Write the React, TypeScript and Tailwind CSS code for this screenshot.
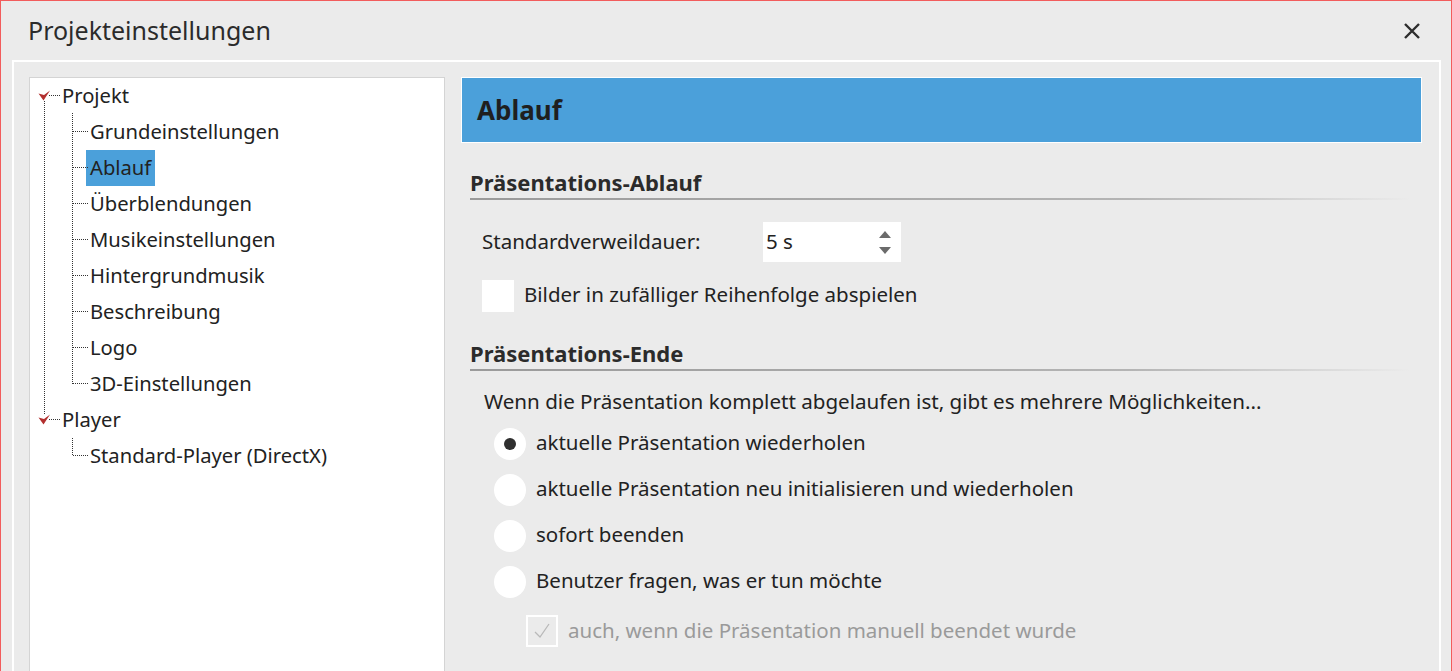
import React from "react";

const font = { fontFamily: '"Noto Sans", "Open Sans", sans-serif' };

const tree: { label: string; level: number; selected?: boolean }[] = [
  { label: "Projekt", level: 0 },
  { label: "Grundeinstellungen", level: 1 },
  { label: "Ablauf", level: 1, selected: true },
  { label: "Überblendungen", level: 1 },
  { label: "Musikeinstellungen", level: 1 },
  { label: "Hintergrundmusik", level: 1 },
  { label: "Beschreibung", level: 1 },
  { label: "Logo", level: 1 },
  { label: "3D-Einstellungen", level: 1 },
  { label: "Player", level: 0 },
  { label: "Standard-Player (DirectX)", level: 1 },
];

function TreeLines() {
  const dots = { stroke: "#333", strokeWidth: 1, strokeDasharray: "1 1" } as const;
  const childYs = [1, 2, 3, 4, 5, 6, 7, 8].map((k) => 18 + 36 * k - 0.5);
  return (
    <svg className="absolute left-0 top-0 pointer-events-none" width="420" height="420">
      <polygon points="8.5,15.5 14,17 20,12.5 13.5,22.5" fill="#b3302f" />
      <polygon points="8.5,339.5 14,341 20,336.5 13.5,346.5" fill="#b3302f" />
      <line x1="19" y1="17.5" x2="30" y2="17.5" {...dots} />
      <line x1="19" y1="341.5" x2="30" y2="341.5" {...dots} />
      <line x1="14.5" y1="23" x2="14.5" y2="336" {...dots} />
      <line x1="42.5" y1="35" x2="42.5" y2="306" {...dots} />
      {childYs.map((y) => (
        <line key={y} x1="43" y1={y} x2="58" y2={y} {...dots} />
      ))}
      <line x1="42.5" y1="360" x2="42.5" y2="378" {...dots} />
      <line x1="43" y1="377.5" x2="58" y2="377.5" {...dots} />
    </svg>
  );
}

function SectionTitle({ children }: { children: React.ReactNode }) {
  return (
    <div className="ml-[9px] mr-[12px]">
      <div className="h-[26px] leading-[26px] text-[22px] font-bold text-[#2b2b2b]">{children}</div>
      <div className="mt-[3px] h-[2px] bg-linear-to-r from-[#9a9a9a] via-[#b4b4b4] via-70% to-[#ebebeb]" />
    </div>
  );
}

function Radio({ label, checked }: { label: string; checked?: boolean }) {
  return (
    <div className="flex items-center h-[32px] ml-[33px]">
      <div className="w-[32px] h-[32px] rounded-full bg-white flex items-center justify-center">
        {checked && <div className="w-[12px] h-[12px] rounded-full bg-[#2f2f2f]" />}
      </div>
      <span className="ml-[10px] pb-[3px] text-[20.5px] text-[#222]">{label}</span>
    </div>
  );
}

export default function App() {
  return (
    <div
      style={font}
      className="w-[1452px] h-[671px] overflow-hidden bg-[#ebebeb] border-l border-t border-r border-[#f25c5c] flex flex-col"
    >
      <div className="h-[59px] flex items-center justify-between pl-[27px] pr-[30px] shrink-0">
        <span className="text-[25px] text-[#2b2b2b] mt-[1px]">Projekteinstellungen</span>
        <svg width="18" height="18" viewBox="0 0 18 18">
          <path d="M2 2 L16 16 M16 2 L2 16" stroke="#2d2d2d" strokeWidth="2.4" />
        </svg>
      </div>
      <div className="ml-[11px] mr-[10px] flex-1 border-l-2 border-t-2 border-r-2 border-white flex pl-[15px] pt-[15px] pr-[17px] gap-[16px]">
        <div className="w-[416px] shrink-0 bg-white border border-[#d4d4d4] border-b-0 relative">
          <TreeLines />
          <div className="flex flex-col">
            {tree.map((t) => (
              <div
                key={t.label}
                className={`h-[36px] flex items-center ${t.level === 0 ? "pl-[28px]" : "pl-[56px]"}`}
              >
                <span
                  className={`h-[36px] px-[4px] pb-[2px] flex items-center text-[20.2px] text-[#222] ${
                    t.selected ? "bg-[#4ba0da]" : ""
                  }`}
                >
                  {t.label}
                </span>
              </div>
            ))}
          </div>
        </div>
        <div className="flex-1 flex flex-col">
          <div className="h-[66px] border border-white bg-[#4ba0da] flex items-center pl-[15px] shrink-0">
            <span className="text-[26px] font-bold text-[#1f1f1f]">Ablauf</span>
          </div>
          <div className="mt-[26px]">
            <SectionTitle>Präsentations-Ablauf</SectionTitle>
          </div>
          <div className="mt-[22px] ml-[21px] h-[40px] flex items-center">
            <span className="w-[281px] pb-[2px] text-[20.5px] text-[#222]">Standardverweildauer:</span>
            <div className="w-[138px] h-[40px] bg-white flex items-center justify-between pl-[3px] pr-[10px]">
              <span className="pb-[2px] text-[20.5px] text-[#222]">5 s</span>
              <div className="flex flex-col gap-[9px]">
                <svg width="12" height="7" viewBox="0 0 12 7">
                  <polygon points="6,0 12,7 0,7" fill="#6b6b6b" />
                </svg>
                <svg width="12" height="7" viewBox="0 0 12 7">
                  <polygon points="0,0 12,0 6,7" fill="#6b6b6b" />
                </svg>
              </div>
            </div>
          </div>
          <div className="mt-[18px] ml-[21px] h-[32px] flex items-center">
            <div className="w-[32px] h-[32px] bg-white" />
            <span className="ml-[10px] pb-[3px] text-[20.5px] text-[#222]">Bilder in zufälliger Reihenfolge abspielen</span>
          </div>
          <div className="mt-[28px]">
            <SectionTitle>Präsentations-Ende</SectionTitle>
          </div>
          <div className="mt-[17px] ml-[23px] h-[26px] leading-[26px] text-[20.6px] text-[#222] whitespace-nowrap">
            Wenn die Präsentation komplett abgelaufen ist, gibt es mehrere Möglichkeiten...
          </div>
          <div className="mt-[14px] flex flex-col gap-[14px]">
            <Radio label="aktuelle Präsentation wiederholen" checked />
            <Radio label="aktuelle Präsentation neu initialisieren und wiederholen" />
            <Radio label="sofort beenden" />
            <Radio label="Benutzer fragen, was er tun möchte" />
          </div>
          <div className="mt-[17px] ml-[65px] h-[32px] flex items-center">
            <div className="w-[32px] h-[32px] border-2 border-white flex items-center justify-center">
              <svg width="20" height="20" viewBox="0 0 20 20">
                <path d="M3 11 L8 16 L17 3" fill="none" stroke="#b9b9b9" strokeWidth="1.3" />
              </svg>
            </div>
            <span className="ml-[10px] pb-[2px] text-[20.5px] text-[#9a9a9a]">
              auch, wenn die Präsentation manuell beendet wurde
            </span>
          </div>
        </div>
      </div>
    </div>
  );
}
